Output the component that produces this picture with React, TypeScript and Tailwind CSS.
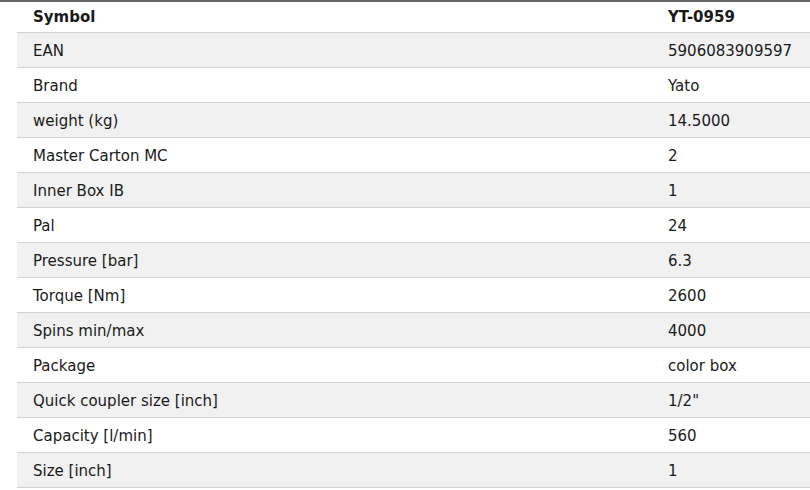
const rows: [string, string][] = [
  ["EAN", "5906083909597"],
  ["Brand", "Yato"],
  ["weight (kg)", "14.5000"],
  ["Master Carton MC", "2"],
  ["Inner Box IB", "1"],
  ["Pal", "24"],
  ["Pressure [bar]", "6.3"],
  ["Torque [Nm]", "2600"],
  ["Spins min/max", "4000"],
  ["Package", "color box"],
  ["Quick coupler size [inch]", "1/2\""],
  ["Capacity [l/min]", "560"],
  ["Size [inch]", "1"],
];

export default function App() {
  return (
    <div className="w-[810px] h-[490px] bg-white overflow-hidden font-['DejaVu_Sans',Verdana,sans-serif] text-[15px] text-[#1a1a1a]">
      <div className="h-[2px] bg-[#666]" />
      <div className="pl-[17px] w-[840px]">
        <div className="flex h-[31px] items-center border-b border-[#d4d4d4] font-bold">
          <div className="w-[635px] pl-4">Symbol</div>
          <div className="pl-4">YT-0959</div>
        </div>
        {rows.map(([k, v], i) => (
          <div
            key={k}
            className={`flex h-[35px] items-center pt-[2px] border-b border-[#d4d4d4] ${i % 2 === 0 ? "bg-[#f1f1f1]" : "bg-white"}`}
          >
            <div className="w-[635px] pl-4">{k}</div>
            <div className="pl-4">{v}</div>
          </div>
        ))}
      </div>
    </div>
  );
}
